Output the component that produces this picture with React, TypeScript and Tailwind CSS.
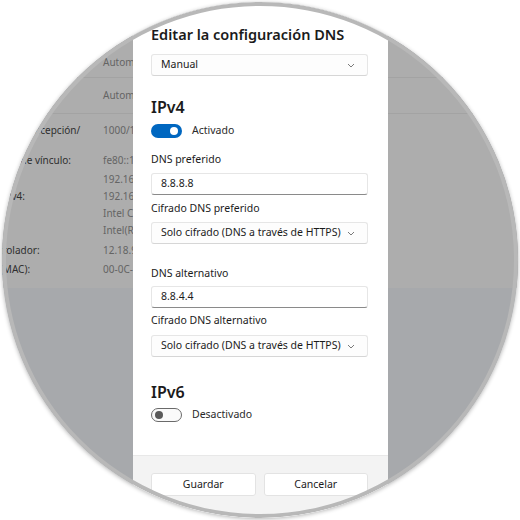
import React from 'react';

const rows = [
  { label: 'Velocidad de vínculo (Recepción/', value: '1000/1000 (Mbps)', mt: 'mt-[8px]' },
  { label: 'Dirección IPv6 local de vínculo:', value: 'fe80::1c4b:9a2f:5d3e:7b21%12', mt: 'mt-[13px]' },
  { label: 'Dirección IPv4:', value: '192.168.1.40', mt: 'mt-[2px]' },
  { label: 'Servidores DNS IPv4:', value: '192.168.1.1', mt: 'mt-0' },
  { label: 'Fabricante:', value: 'Intel Corporation', mt: 'mt-0' },
  { label: 'Descripción:', value: 'Intel(R) 82574L Gigabit', mt: 'mt-0' },
  { label: 'Versión del controlador:', value: '12.18.9.23', mt: 'mt-[3px]' },
  { label: 'Dirección física (MAC):', value: '00-0C-29-4F-8A-12', mt: 'mt-[2px]' },
];

const Chevron = () => (
  <svg width="8" height="5" viewBox="0 0 8 5" className="shrink-0">
    <path d="M1 1l3 3 3-3" fill="none" stroke="#7a7a7a" strokeWidth="1" />
  </svg>
);

const Select = ({ text, className = '' }: { text: string; className?: string }) => (
  <div className={`h-[22px] rounded-[3px] border border-[#e6e6e6] border-b-[#d6d6d6] bg-[#fdfdfd] pl-[9px] pr-[12px] flex items-center justify-between text-[10.5px] text-[#1b1b1b] ${className}`}>
    <span>{text}</span>
    <Chevron />
  </div>
);

const Input = ({ value, className = '' }: { value: string; className?: string }) => (
  <div className={`h-[22px] rounded-[3px] border border-[#e6e6e6] border-b-[#8a8a8a] bg-white pl-[9px] flex items-center text-[10.5px] text-[#1b1b1b] ${className}`}>
    {value}
  </div>
);

const SettingsPage = () => (
  <div className="text-[10px]">
    <div className="h-[78px] bg-[#adadad] border-b border-[#a3a3a3] flex items-end pb-[7px]">
      <span className="ml-[103px] text-[#646464]">Automático (DHCP)</span>
    </div>
    <div className="h-[36px] bg-[#adadad] border-b border-[#a3a3a3] flex items-center">
      <span className="ml-[103px] text-[#646464]">Automático (DHCP)</span>
    </div>
    <div className="h-[174px] bg-[#adadad] flex flex-col -ml-[73px]">
      {rows.map((r) => (
        <div key={r.label} className={`flex h-[17px] items-center ${r.mt}`}>
          <span className="w-[176px] shrink-0 whitespace-nowrap text-[#2f2f2f]">{r.label}</span>
          <span className="whitespace-nowrap text-[#646464]">{r.value}</span>
        </div>
      ))}
    </div>
  </div>
);

const Dialog = () => (
  <div className="absolute left-[133px] top-0 w-[255px] bg-white text-[#1b1b1b]">
    <div className="pt-[25px] pl-[18px] pr-[20px]">
      <div className="h-[20px] flex items-center text-[14.5px] font-semibold whitespace-nowrap">Editar la configuración DNS</div>
      <Select text="Manual" className="mt-[9px]" />

      <div className="mt-[21px] h-[20px] flex items-center text-[16px] font-semibold">IPv4</div>
      <div className="mt-[6px] h-[16px] flex items-center gap-[10px]">
        <div className="w-[31px] h-[14px] rounded-full bg-[#0067c0] flex items-center justify-end pr-[4px]">
          <div className="w-[8px] h-[8px] rounded-full bg-white" />
        </div>
        <span className="text-[10.5px] text-[#2a2a2a]">Activado</span>
      </div>

      <div className="mt-[14px] h-[14px] flex items-center text-[10.5px]">DNS preferido</div>
      <Input value="8.8.8.8" className="mt-[6px]" />
      <div className="mt-[7px] h-[14px] flex items-center text-[10.5px]">Cifrado DNS preferido</div>
      <Select text="Solo cifrado (DNS a través de HTTPS)" className="mt-[6px]" />

      <div className="mt-[23px] h-[14px] flex items-center text-[10.5px]">DNS alternativo</div>
      <Input value="8.8.4.4" className="mt-[5px]" />
      <div className="mt-[6px] h-[14px] flex items-center text-[10.5px]">Cifrado DNS alternativo</div>
      <Select text="Solo cifrado (DNS a través de HTTPS)" className="mt-[7px]" />

      <div className="mt-[25px] h-[20px] flex items-center text-[16px] font-semibold">IPv6</div>
      <div className="mt-[5px] h-[16px] flex items-center gap-[10px]">
        <div className="w-[31px] h-[14px] rounded-full border border-[#6a6a6a] bg-[#fafafa] flex items-center pl-[3px]">
          <div className="w-[8px] h-[8px] rounded-full bg-[#5a5a5a]" />
        </div>
        <span className="text-[10.5px] text-[#2a2a2a]">Desactivado</span>
      </div>
    </div>

    <div className="mt-[32px] border-t border-[#e8e8e8] bg-[#f3f3f3] pt-[17px] pb-[30px] pl-[18px] pr-[20px] grid grid-cols-2 gap-[8px]">
      <button className="h-[23px] rounded-[3px] border border-[#e3e3e3] bg-white text-[10.5px] text-[#1b1b1b]">Guardar</button>
      <button className="h-[23px] rounded-[3px] border border-[#e3e3e3] bg-white text-[10.5px] text-[#1b1b1b]">Cancelar</button>
    </div>
  </div>
);

export default function App() {
  return (
    <div className="w-[520px] h-[520px] bg-white flex items-center justify-center font-['Noto_Sans',sans-serif]">
      <div className="relative w-[516px] h-[516px] rounded-full overflow-hidden shadow-[0_1px_4px_rgba(0,0,0,0.3)]">
        <div className="relative -ml-[2px] -mt-[2px] w-[520px] h-[520px] bg-[#a7a9ac]">
          <SettingsPage />
          <Dialog />
        </div>
        <div className="absolute inset-0 rounded-full border-[4px] border-[#b8b8b8]" />
      </div>
    </div>
  );
}
